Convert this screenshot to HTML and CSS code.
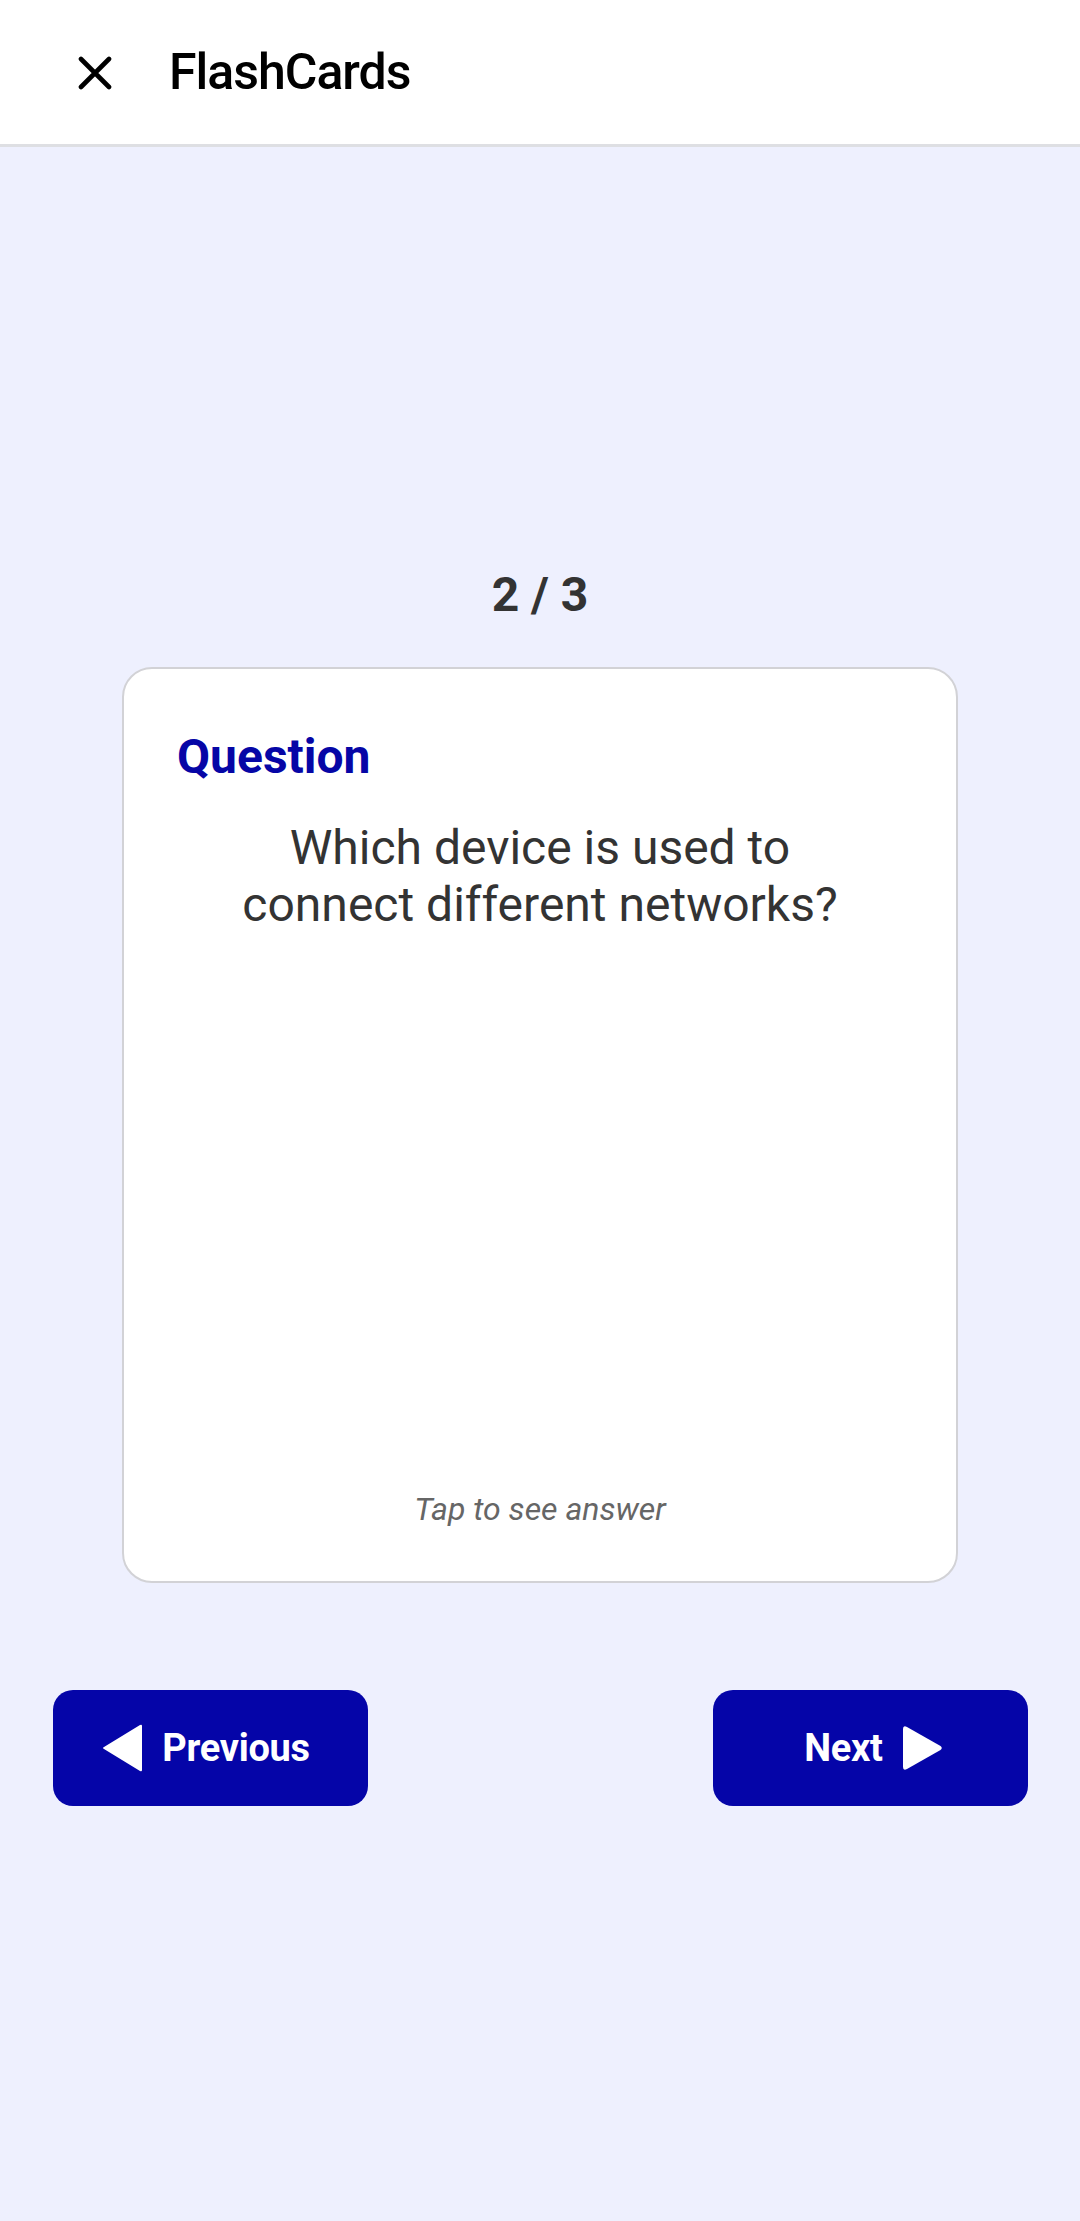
FILE: index.html
```html
<!DOCTYPE html>
<html lang="en">
<head>
<meta charset="utf-8">
<title>FlashCards</title>
<link rel="stylesheet" href="styles.css">
</head>
<body>
<header class="topbar">
  <button class="close-btn" aria-label="Close">
    <svg viewBox="0 0 34 34" width="34" height="34">
      <path d="M3 3 L31 31 M31 3 L3 31" stroke="#000" stroke-width="4.6" stroke-linecap="round" fill="none"/>
    </svg>
  </button>
  <h1 class="title">FlashCards</h1>
</header>
<main class="content">
  <div class="counter">2 / 3</div>
  <section class="card">
    <div class="card-label">Question</div>
    <p class="card-text">Which device is used to<br>connect different networks?</p>
    <div class="card-hint">Tap to see answer</div>
  </section>
  <nav class="nav-row">
    <button class="nav-btn nav-prev">
      <svg class="tri" viewBox="0 0 40 50" width="40" height="50">
        <path d="M38 2 Q40 1 40 3 L40 47 Q40 49 38 48 L2 26 Q0 25 2 24 Z" fill="#fff"/>
      </svg>
      <span>Previous</span>
    </button>
    <button class="nav-btn nav-next">
      <span>Next</span>
      <svg class="tri" viewBox="0 0 40 46" width="40" height="46">
        <path d="M0 4 Q0 0 4 2 L37.5 21 Q40 23 37.5 25 L4 44 Q0 46 0 42 Z" fill="#fff"/>
      </svg>
    </button>
  </nav>
</main>
</body>
</html>
```
FILE: styles.css
```css
* { box-sizing: border-box; }
html, body { margin: 0; padding: 0; }
body {
  width: 1080px;
  min-height: 2221px;
  background: #eef0fe;
  font-family: Roboto, "Noto Sans", "Liberation Sans", sans-serif;
}
.topbar {
  height: 147px;
  background: #fff;
  border-bottom: 3px solid #dedfe3;
  display: flex;
  align-items: center;
  padding-left: 78px;
}
.close-btn {
  border: 0;
  background: none;
  padding: 0;
  width: 34px;
  height: 34px;
  display: flex;
  margin-top: 2px;
}
.title {
  margin: 0 0 0 57px;
  font-size: 50px;
  letter-spacing: -1px;
  font-weight: 500;
  color: #000;
  line-height: 1;
}
.content {
  display: flex;
  flex-direction: column;
  align-items: center;
  padding-top: 419px;
}
.counter {
  font-size: 48px;
  font-weight: 700;
  color: #333;
  line-height: normal;
}
.card {
  margin-top: 44px;
  width: 836px;
  height: 916px;
  background: #fff;
  border: 2.5px solid #d2d2d6;
  border-radius: 30px;
  padding: 59px 53px 53px;
  display: flex;
  flex-direction: column;
}
.card-label {
  font-size: 48px;
  font-weight: 700;
  color: #0606a6;
  line-height: normal;
}
.card-text {
  margin: 34px 0 0;
  text-align: center;
  font-size: 48px;
  line-height: 57px;
  color: #333;
}
.card-hint {
  margin-top: auto;
  text-align: center;
  font-size: 32px;
  font-style: italic;
  color: #666;
  line-height: normal;
}
.nav-row {
  margin-top: 107px;
  width: 100%;
  padding: 0 52px 0 53px;
  display: flex;
  justify-content: space-between;
}
.nav-btn {
  width: 315px;
  height: 116px;
  border: 0;
  border-radius: 20px;
  background: #0505a8;
  color: #fff;
  font-family: Roboto, "Noto Sans", "Liberation Sans", sans-serif;
  font-size: 38px;
  letter-spacing: -0.3px;
  font-weight: 700;
  display: flex;
  align-items: center;
  justify-content: center;
  gap: 20px;
  padding: 0;
}
.nav-prev { padding-right: 9px; }
.nav-next { padding-left: 6px; }
.tri { display: block; }
```
